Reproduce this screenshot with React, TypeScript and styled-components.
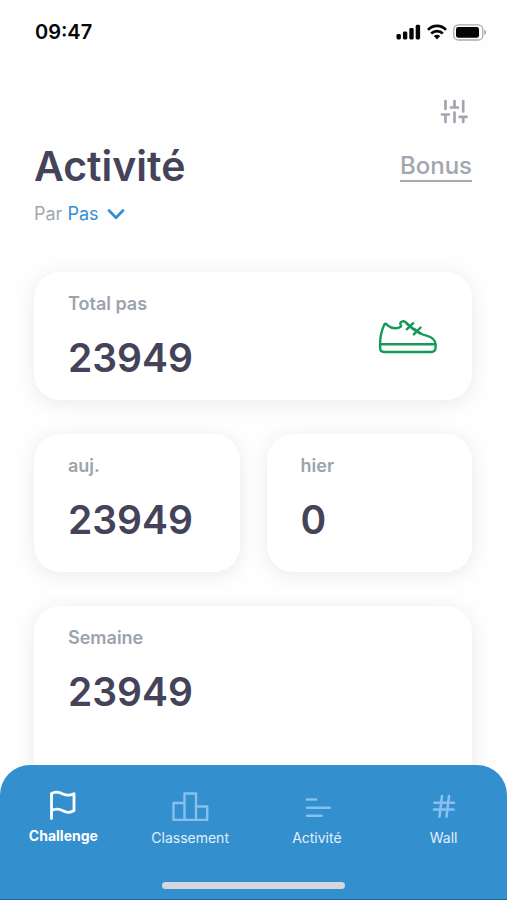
import React from "react";
import styled, { createGlobalStyle } from "styled-components";

const GlobalStyle = createGlobalStyle`
  *, *::before, *::after { box-sizing: border-box; }
  body {
    margin: 0;
    background: #fefefe;
    color: #454359;
    font-family: Inter, "Liberation Sans", sans-serif;
  }
`;

const Screen = styled.div`
  display: flex;
  flex-direction: column;
  height: 100vh;
  overflow: hidden;
`;

const StatusBar = styled.div`
  display: flex;
  flex: none;
  align-items: center;
  justify-content: space-between;
  height: 64px;
  padding: 0 20px 0 35px;
  color: #060606;
`;

const Clock = styled.time`
  font-size: 20px;
  font-weight: 600;
  line-height: 24px;
`;

const StatusIcons = styled.div`
  display: flex;
  align-items: center;
  gap: 6px;
`;

const Content = styled.main`
  flex: 1;
  min-height: 0;
  padding: 32px 35px 0 34px;
  overflow-y: auto;
  scrollbar-width: none;
`;

const Tools = styled.div`
  display: flex;
  justify-content: flex-end;
  padding-right: 4px;
`;

const IconButton = styled.button`
  display: flex;
  padding: 2px 0;
  border: 0;
  background: none;
  color: #a1a6b0;
  cursor: pointer;
`;

const Heading = styled.div`
  display: flex;
  align-items: flex-end;
  justify-content: space-between;
  margin-top: 14px;
`;

const Title = styled.h1`
  margin: 0;
  font-size: 41px;
  font-weight: 600;
  line-height: 52px;
`;

const BonusLink = styled.a`
  margin-bottom: 10px;
  border-bottom: 2px solid #a4a9b3;
  color: #a1a6b0;
  font-size: 24px;
  font-weight: 500;
  line-height: 28px;
  text-decoration: none;
`;

const Filter = styled.label`
  display: flex;
  align-items: center;
  gap: 5px;
  margin-top: 10px;
  color: #a4a7ae;
  font-size: 18px;
  line-height: 24px;
`;

const SelectBox = styled.span`
  display: inline-flex;
  align-items: center;
  gap: 8px;
  color: #328fd0;
`;

const Select = styled.select`
  appearance: none;
  field-sizing: content;
  padding: 0;
  border: 0;
  background: none;
  color: inherit;
  font: inherit;
  cursor: pointer;
`;

const Cards = styled.div`
  display: grid;
  grid-template-columns: 1fr 1fr;
  gap: 34px 27px;
  margin-top: 46px;
`;

const Card = styled.section<{ $wide?: boolean; $height: number }>`
  display: flex;
  align-items: center;
  justify-content: space-between;
  grid-column: ${({ $wide }) => ($wide ? "1 / -1" : "auto")};
  min-height: ${({ $height }) => $height}px;
  padding: 20px 34px 18px;
  border-radius: 26px;
  background: #fff;
  box-shadow: 0 3px 18px rgba(50, 60, 75, 0.1);
`;

const Stat = styled.div`
  align-self: flex-start;
`;

const Label = styled.h2`
  margin: 0;
  color: #9ba3ae;
  font-size: 18px;
  font-weight: 600;
  line-height: 24px;
`;

const Value = styled.p`
  margin: 18px 0 0;
  font-size: 39px;
  font-weight: 600;
  line-height: 48px;
`;

const TabBar = styled.nav`
  position: relative;
  flex: none;
  margin-top: -32px;
  padding: 24px 0 10px;
  border-bottom: 1px solid #17649f;
  border-radius: 30px 30px 0 0;
  background: #348fcf;
`;

const Tabs = styled.div`
  display: grid;
  grid-template-columns: repeat(4, 1fr);
`;

const Tab = styled.a<{ $active?: boolean }>`
  display: flex;
  flex-direction: column;
  align-items: center;
  gap: ${({ $active }) => ($active ? 6 : 8)}px;
  color: ${({ $active }) => ($active ? "#fff" : "#e2f0fb")};
  font-size: 14px;
  font-weight: ${({ $active }) => ($active ? 700 : 400)};
  line-height: 18px;
  text-decoration: none;

  svg {
    color: ${({ $active }) => ($active ? "#fff" : "#86c0ee")};
  }
`;

const HomeIndicator = styled.div`
  width: 36%;
  height: 7px;
  margin: 35px auto 0;
  border-radius: 4px;
  background: #d5d7da;
`;

const SignalIcon = () => (
  <svg width="25" height="16" viewBox="0 0 25 16" fill="currentColor" aria-hidden="true">
    <rect x="0.5" y="10" width="4.4" height="5.5" rx="1.4" />
    <rect x="6.9" y="7.5" width="4.4" height="8" rx="1.4" />
    <rect x="13.3" y="4" width="4.4" height="11.5" rx="1.4" />
    <rect x="19.7" y="0.8" width="4.4" height="14.7" rx="1.4" />
  </svg>
);

const WifiIcon = () => (
  <svg width="20" height="16" viewBox="0 0 20 16" aria-hidden="true">
    <g fill="none" stroke="currentColor" strokeWidth="2.7">
      <path d="M0.9 5.9C6 0.5 14 0.5 19.1 5.9" />
      <path d="M4.2 9.5C7.4 6.2 12.6 6.2 15.8 9.5" />
    </g>
    <path d="M6.8 12.1C8.6 10.4 11.4 10.4 13.2 12.1L10 15.6Z" fill="currentColor" />
  </svg>
);

const BatteryIcon = () => (
  <svg width="34" height="17" viewBox="0 0 34 17" aria-hidden="true">
    <rect x="0.8" y="0.8" width="29" height="15.2" rx="4.6" fill="none" stroke="#a9a9a9" strokeWidth="1.3" />
    <rect x="3" y="3" width="23" height="10.8" rx="2.4" fill="currentColor" />
    <path d="M31.3 5.8C33.6 6.6 33.6 10.2 31.3 11Z" fill="#a0a0a0" />
  </svg>
);

const SlidersIcon = () => (
  <svg width="28" height="26" viewBox="0 0 28 26" fill="none" stroke="currentColor" strokeWidth="2.7" strokeLinecap="round" aria-hidden="true">
    <path d="M5.5 3V11M5.5 16.5V24M2 16.5H9M14.5 3V9.5M11 9.5H18M14.5 14.5V24M23.2 3V13.5M23.2 18.8V24M19.5 18.8H26.5" />
  </svg>
);

const ChevronIcon = () => (
  <svg width="18" height="12" viewBox="0 0 18 12" fill="none" stroke="currentColor" strokeWidth="2.7" strokeLinecap="round" strokeLinejoin="round" aria-hidden="true">
    <path d="M2 2.5L9 9.8L16 2.5" />
  </svg>
);

const ShoeIcon = () => (
  <svg width="60" height="36" viewBox="0 0 60 36" fill="none" stroke="#159a55" strokeWidth="2.4" strokeLinecap="round" strokeLinejoin="round" aria-hidden="true">
    <path d="M6.5 5.2C3.6 11 2.1 18 2.1 25V29C2.1 31.8 4 33 6.2 33H53C55.8 33 57.6 31.2 57.6 28.6V26C57.6 20.5 53.5 18 48.5 16.7C43 15.4 38.8 13.3 34.3 9.4L27.5 3.2C25.8 1.6 22.6 2.3 22.2 4.5C22 5.6 24 6.6 22.8 7.7C20.4 9.8 13.7 10.1 10 6.7C8.6 5.4 7.3 4 6.5 5.2Z" />
    <path d="M2.3 25.3H57.4M28.7 10.3L35.2 4.2M28.8 4.8L34.8 9.6M35.8 15.4L42.6 8.5M36 9.8L42.5 14.3" />
  </svg>
);

const FlagIcon = () => (
  <svg width="28" height="32" viewBox="0 0 28 32" fill="none" stroke="currentColor" strokeWidth="2.8" strokeLinecap="round" strokeLinejoin="round" aria-hidden="true">
    <path d="M2.5 29.5V4.5C6.5 2.2 10.3 3.1 14 5C17.5 6.7 21 6.7 25 4.7V21.5C21 24.3 17.5 23.8 14 21.8C10.3 19.8 6.5 19.5 2.5 21.5" />
  </svg>
);

const PodiumIcon = () => (
  <svg width="38" height="32" viewBox="0 0 38 32" fill="none" stroke="currentColor" strokeWidth="2.4" strokeLinejoin="round" aria-hidden="true">
    <path d="M2.5 31V14H13.5V31ZM13.5 31V4.5H25V31ZM25 31V17.5H36.2V31Z" />
  </svg>
);

const ActivityIcon = () => (
  <svg width="28" height="32" viewBox="0 0 28 32" fill="none" stroke="currentColor" strokeWidth="2.6" strokeLinecap="round" aria-hidden="true">
    <path d="M4 10.5H13M4 18.7H26.7M4 26.8H18.5" />
  </svg>
);

const HashIcon = () => (
  <svg width="24" height="32" viewBox="0 0 24 32" fill="none" stroke="currentColor" strokeWidth="2.6" strokeLinecap="round" aria-hidden="true">
    <path d="M2.5 13.8H22M2 20.5H21.5M10 7L7.5 27.8M17 7L14.5 27.8" />
  </svg>
);

const tabs = [
  { name: "Challenge", Icon: FlagIcon, active: true },
  { name: "Classement", Icon: PodiumIcon },
  { name: "Activité", Icon: ActivityIcon },
  { name: "Wall", Icon: HashIcon },
];

const StatBlock = ({ label, value }: { label: string; value: string }) => (
  <Stat>
    <Label>{label}</Label>
    <Value>{value}</Value>
  </Stat>
);

export default function App() {
  return (
    <Screen>
      <GlobalStyle />
      <StatusBar>
        <Clock>09:47</Clock>
        <StatusIcons>
          <SignalIcon />
          <WifiIcon />
          <BatteryIcon />
        </StatusIcons>
      </StatusBar>
      <Content>
        <Tools>
          <IconButton type="button" aria-label="Filtres">
            <SlidersIcon />
          </IconButton>
        </Tools>
        <Heading>
          <Title>Activité</Title>
          <BonusLink href="#bonus">Bonus</BonusLink>
        </Heading>
        <Filter>
          Par
          <SelectBox>
            <Select defaultValue="Pas">
              <option>Pas</option>
            </Select>
            <ChevronIcon />
          </SelectBox>
        </Filter>
        <Cards>
          <Card $wide $height={128}>
            <StatBlock label="Total pas" value="23949" />
            <ShoeIcon />
          </Card>
          <Card $height={138}>
            <StatBlock label="auj." value="23949" />
          </Card>
          <Card $height={138}>
            <StatBlock label="hier" value="0" />
          </Card>
          <Card $wide $height={240}>
            <StatBlock label="Semaine" value="23949" />
          </Card>
        </Cards>
      </Content>
      <TabBar aria-label="Navigation">
        <Tabs>
          {tabs.map(({ name, Icon, active }) => (
            <Tab key={name} href={`#${name.toLowerCase()}`} $active={active} aria-current={active ? "page" : undefined}>
              <Icon />
              {name}
            </Tab>
          ))}
        </Tabs>
        <HomeIndicator />
      </TabBar>
    </Screen>
  );
}
